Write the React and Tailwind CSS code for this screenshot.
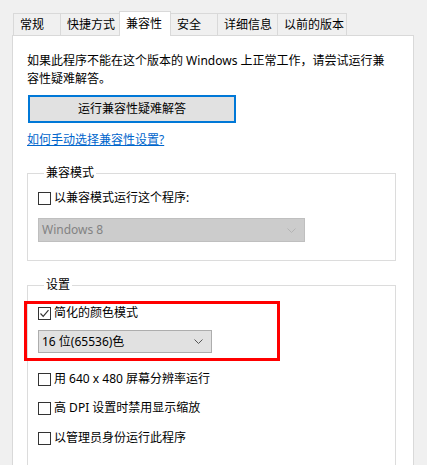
import React from 'react';

const font = { fontFamily: '"Noto Sans", "Noto Sans CJK SC", sans-serif' };

const tabs = [
  { label: '常规', w: 'w-[48px]' },
  { label: '快捷方式', w: 'w-[60px]' },
  { label: '兼容性', w: 'w-[52px]', active: true },
  { label: '安全', w: 'w-[48px]' },
  { label: '详细信息', w: 'w-[61px]' },
  { label: '以前的版本', w: 'w-[70px]' },
];

const Chevron = ({ color }) => (
  <svg width="9" height="5" viewBox="0 0 9 5" fill="none">
    <path d="M0.5 0.5 L4.5 4.5 L8.5 0.5" stroke={color} strokeWidth="1" />
  </svg>
);

const CheckBox = ({ checked }) => (
  <span className="w-[13px] h-[13px] border border-[#333333] bg-white flex items-center justify-center shrink-0">
    {checked && (
      <svg width="11" height="11" viewBox="0 0 11 11" fill="none">
        <path d="M1.5 5.5 L4.2 8.3 L9.5 2.2" stroke="#333333" strokeWidth="1.2" />
      </svg>
    )}
  </span>
);

const CheckRow = ({ label, checked, className = '' }) => (
  <div className={`flex items-center gap-[3px] h-[18px] leading-[18px] ${className}`}>
    <CheckBox checked={checked} />
    <span>{label}</span>
  </div>
);

const App = () => {
  return (
    <div className="w-[427px] h-[465px] overflow-hidden bg-[#f0f0f0] pt-[11px] text-[12px] text-black" style={font}>
      <div className="flex items-end pl-[13px]">
        {tabs.map((t, i) => (
          <div
            key={t.label}
            className={`${t.w} ${i > 0 ? '-ml-px' : ''} ${
              t.active
                ? 'h-[25px] -mb-px bg-white relative z-10'
                : 'h-[22px] bg-[#f0f0f0]'
            } border border-b-0 border-[#d9d9d9] flex items-center pl-[6px] whitespace-nowrap`}
          >
            {t.label}
          </div>
        ))}
      </div>
      <div className="ml-[12px] w-[402px] h-[440px] bg-white border border-[#d9d9d9] pt-[16px] pl-[14px]">
        <p className="leading-[18px] whitespace-nowrap">
          如果此程序不能在这个版本的 Windows 上正常工作，请尝试运行兼
          <br />
          容性疑难解答。
        </p>
        <button className="mt-[7px] ml-px w-[208px] h-[28px] border-2 border-[#0078d7] bg-[#e1e1e1] flex items-center justify-center">
          运行兼容性疑难解答
        </button>
        <div className="mt-[8px] leading-[18px]">
          <a href="#" className="text-[#0066cc] underline">如何手动选择兼容性设置?</a>
        </div>

        <fieldset className="mt-[15px] w-[369px] border border-[#dcdcdc] pl-[10px] pb-[18px]">
          <legend className="ml-[6px] px-[2px] leading-[18px]">兼容模式</legend>
          <CheckRow label="以兼容模式运行这个程序:" className="mt-[7px]" />
          <div className="mt-[11px] w-[267px] h-[24px] bg-[#cccccc] border border-[#bfbfbf] flex items-center justify-between pl-[3px] pr-[8px] text-[#838383]">
            <span>Windows 8</span>
            <Chevron color="#b4b4b4" />
          </div>
        </fieldset>

        <fieldset className="mt-[15px] w-[369px] h-[200px] border border-[#dcdcdc] pl-[10px]">
          <legend className="ml-[6px] px-[2px] leading-[18px]">设置</legend>
          <div className="mt-[7px] -ml-[14px] w-[256px] border-[3px] border-[#ff0000] pl-[11px] pb-[5px]">
            <CheckRow label="简化的颜色模式" checked />
            <div className="mt-[8px] w-[174px] h-[23px] bg-[#e1e1e1] border border-[#adadad] flex items-center justify-between pl-[3px] pr-[8px]">
              <span>16 位(65536)色</span>
              <Chevron color="#555555" />
            </div>
          </div>
          <CheckRow label="用 640 x 480 屏幕分辨率运行" className="mt-[9px]" />
          <CheckRow label="高 DPI 设置时禁用显示缩放" className="mt-[11px]" />
          <CheckRow label="以管理员身份运行此程序" className="mt-[12px]" />
        </fieldset>
      </div>
    </div>
  );
};

export default App;
